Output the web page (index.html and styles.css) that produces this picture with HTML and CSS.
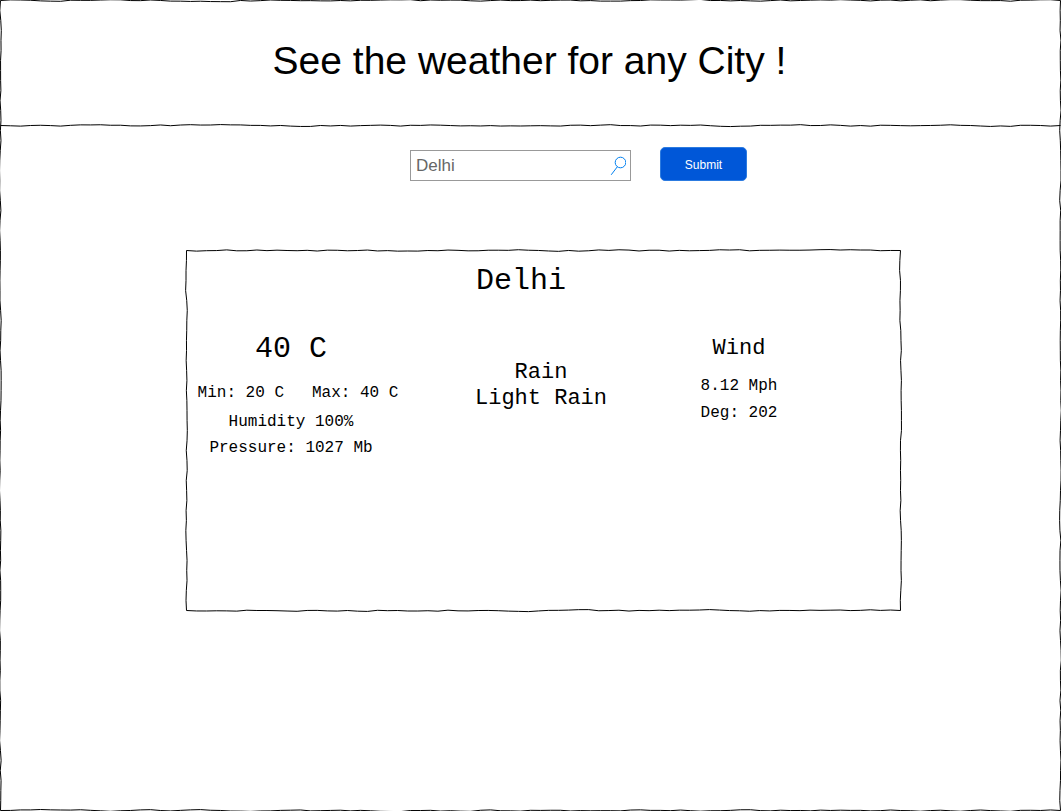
FILE: index.html
```html
<!DOCTYPE html>
<html lang="en">
<head>
<meta charset="utf-8">
<meta name="viewport" content="width=device-width, initial-scale=1">
<title>City weather</title>
<link rel="stylesheet" href="styles.css">
</head>
<body>
<div class="page">
  <svg class="sketch" data-sides="top right bottom left" data-seed="7" aria-hidden="true"><path/></svg>
  <header class="header">
    <svg class="sketch" data-sides="bottom" data-seed="23" aria-hidden="true"><path/></svg>
    <h1 class="title">See the weather for any City !</h1>
  </header>
  <main class="main">
    <form class="search">
      <div class="field">
        <input class="field-input" type="text" value="Delhi" aria-label="City">
        <svg class="field-icon" viewBox="0 0 16 20" aria-hidden="true">
          <circle cx="10.500" cy="6.500" r="5.300"/>
          <path d="M7.300 10.800L1.200 18.800"/>
        </svg>
      </div>
      <button class="submit" type="button">Submit</button>
    </form>
    <section class="card">
      <svg class="sketch" data-sides="top right bottom left" data-seed="41" aria-hidden="true"><path/></svg>
      <h2 class="city">Delhi</h2>
      <div class="columns">
        <div class="column">
          <p class="temperature">40 C</p>
          <p class="range"><span>Min: 20 C</span><span>Max: 40 C</span></p>
          <p class="humidity">Humidity 100%</p>
          <p class="pressure">Pressure: 1027 Mb</p>
        </div>
        <div class="column conditions">
          <p>Rain</p>
          <p>Light Rain</p>
        </div>
        <div class="column wind">
          <h3 class="wind-title">Wind</h3>
          <p>8.12 Mph</p>
          <p>Deg: 202</p>
        </div>
      </div>
    </section>
  </main>
</div>
<script src="sketch.js"></script>
</body>
</html>
```
FILE: styles.css
```css
* {
  box-sizing: border-box;
}

body,
h1,
h2,
h3,
p {
  margin: 0;
  font-weight: 400;
}

body {
  background: #fff;
  color: #000;
  font-family: "Liberation Sans", Arial, sans-serif;
}

.page {
  position: relative;
  min-height: 100vh;
}

.sketch {
  position: absolute;
  inset: 0;
  width: 100%;
  height: 100%;
  overflow: visible;
  pointer-events: none;
  fill: none;
  stroke: #000;
  stroke-width: 1;
}

.header {
  position: relative;
  display: flex;
  align-items: center;
  justify-content: center;
  min-height: 126px;
  padding: 0 2px 4px 0;
}

.title {
  font-size: 39px;
  line-height: 46px;
  text-align: center;
}

.main {
  padding: 21px 160px 40px 186px;
}

.search {
  display: flex;
  align-items: center;
  gap: 29px;
  padding-left: 224px;
}

.field {
  position: relative;
  flex: 0 1 221px;
  margin-top: 3px;
}

.field-input {
  display: block;
  width: 100%;
  height: 31px;
  padding: 0 24px 0 5px;
  border: 1px solid #999;
  border-radius: 0;
  background: #fff;
  color: #666;
  font: 17px "Liberation Sans", Arial, sans-serif;
}

.field-icon {
  position: absolute;
  top: 6px;
  right: 5px;
  width: 16px;
  height: 20px;
  fill: none;
  stroke: #0080f0;
  stroke-width: 1;
}

.submit {
  width: 87px;
  height: 34px;
  padding: 2px 0 0;
  border: 1px solid #2c7be0;
  border-radius: 5px;
  background: #0057d8;
  color: #fff;
  font: 12px "Liberation Sans", Arial, sans-serif;
}

.card {
  position: relative;
  min-height: 361px;
  margin-top: 69px;
  padding-top: 14px;
  font-family: "Liberation Mono", "Courier New", monospace;
  font-size: 16px;
  line-height: 18px;
}

.city {
  padding-right: 45px;
  font-size: 30px;
  line-height: 34px;
  text-align: center;
}

.columns {
  display: grid;
  grid-template-columns: minmax(0, 210fr) minmax(0, 290fr) minmax(0, 106fr) minmax(0, 109fr);
  margin-top: 34px;
}

.column {
  display: flex;
  flex-direction: column;
  align-items: center;
  white-space: nowrap;
}

.temperature {
  font-size: 30px;
  line-height: 34px;
}

.range {
  display: flex;
  gap: 28px;
  margin: 18px 0 11px 14px;
}

.humidity {
  margin-bottom: 8px;
}

.conditions {
  padding-top: 28px;
  font-size: 22px;
  line-height: 26px;
}

.wind {
  gap: 9px;
  padding-top: 4px;
}

.wind-title {
  margin-bottom: 6px;
  font-size: 22px;
  line-height: 26px;
}
```
FILE: sketch.js
```js
// Draws hand-sketched edges around a container, following its size.
const STEP = 10;

function generator(seed) {
  let state = seed * 7919;
  return () => {
    state = (state * 1103515245 + 12345) % 2147483648;
    return state / 2147483648;
  };
}

function edge(x1, y1, x2, y2, random) {
  const length = Math.hypot(x2 - x1, y2 - y1);
  const count = Math.max(1, Math.round(length / STEP));
  const horizontal = y1 === y2;
  let d = `M${x1} ${y1}`;
  let offset = 0;
  for (let i = 1; i < count; i++) {
    offset = offset * 0.5 + (random() * 2 - 1) * 0.7;
    const x = x1 + ((x2 - x1) * i) / count + (horizontal ? 0 : offset);
    const y = y1 + ((y2 - y1) * i) / count + (horizontal ? offset : 0);
    d += `L${x.toFixed(2)} ${y.toFixed(2)}`;
  }
  return `${d}L${x2} ${y2}`;
}

function draw(svg) {
  const { width, height } = svg.getBoundingClientRect();
  const right = width - 0.5;
  const bottom = height - 0.5;
  const lines = {
    top: [0.5, 0.5, right, 0.5],
    right: [right, 0.5, right, bottom],
    bottom: [0.5, bottom, right, bottom],
    left: [0.5, 0.5, 0.5, bottom],
  };
  const random = generator(Number(svg.dataset.seed));
  const d = svg.dataset.sides.split(" ").map((side) => edge(...lines[side], random));
  svg.querySelector("path").setAttribute("d", d.join(""));
}

function drawAll() {
  document.querySelectorAll(".sketch").forEach(draw);
}

drawAll();
window.addEventListener("resize", drawAll);
```
